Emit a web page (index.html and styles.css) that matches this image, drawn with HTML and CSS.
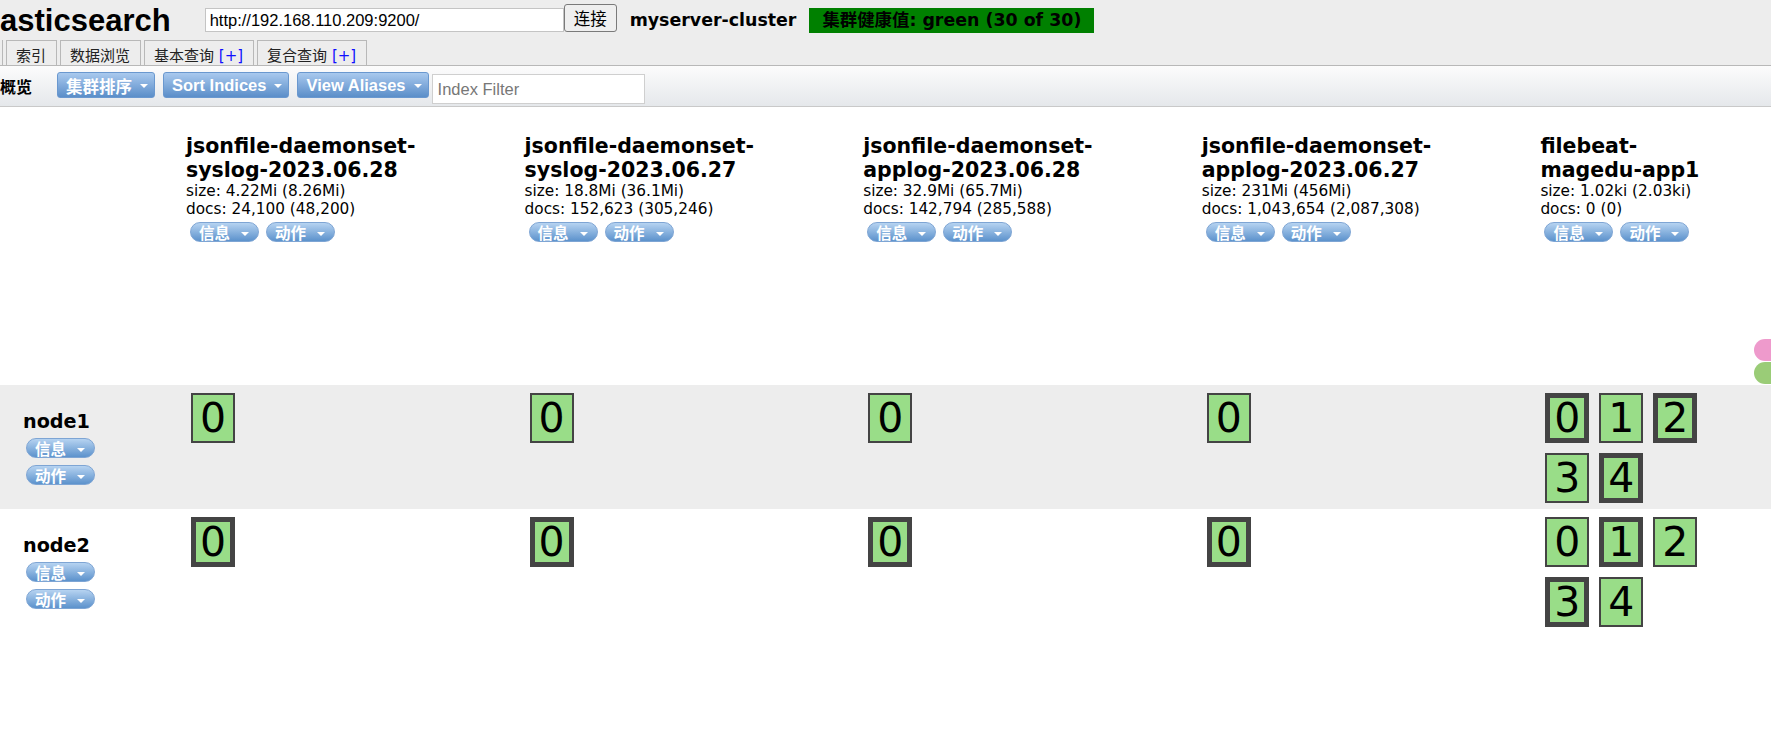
FILE: index.html
```html
<!DOCTYPE html>
<html lang="zh-CN">
<head>
  <meta charset="UTF-8" />
  <meta name="viewport" content="width=device-width, initial-scale=1.0"/>
  <title>elasticsearch-head</title>
  <link rel="stylesheet" href="styles.css">
</head>
<body>
  <div class="header">
    <div class="header-top">
      <h1 class="logo">asticsearch</h1>
      <input type="text" class="cluster-url" value="http://192.168.110.209:9200/">
      <button class="connect-btn">连接</button>
      <span class="cluster-name">myserver-cluster</span>
      <span class="cluster-health">集群健康值: green (30 of 30)</span>
    </div>
    <div class="tabs">
      <div class="tab tab-cut"></div>
      <div class="tab">索引</div>
      <div class="tab">数据浏览</div>
      <div class="tab">基本查询 <span class="tab-plus">[+]</span></div>
      <div class="tab">复合查询 <span class="tab-plus">[+]</span></div>
    </div>
  </div>

  <div class="toolbar">
    <h2>概览</h2>
    <button class="ui-btn">集群排序<span class="caret"></span></button>
    <button class="ui-btn">Sort Indices<span class="caret"></span></button>
    <button class="ui-btn">View Aliases<span class="caret"></span></button>
    <input type="text" class="index-filter" placeholder="Index Filter">
  </div>

  <div class="overview">
    <!-- index headers -->
    <div class="ov-row ov-head">
      <div class="node-cell"></div>
      <div class="index-cell">
        <h3>jsonfile-daemonset-syslog-2023.06.28</h3>
        <div class="index-info">size: 4.22Mi (8.26Mi)</div>
        <div class="index-info">docs: 24,100 (48,200)</div>
        <div class="pill-row">
          <span class="pill">信息<span class="caret"></span></span>
          <span class="pill">动作<span class="caret"></span></span>
        </div>
      </div>
      <div class="index-cell">
        <h3>jsonfile-daemonset-syslog-2023.06.27</h3>
        <div class="index-info">size: 18.8Mi (36.1Mi)</div>
        <div class="index-info">docs: 152,623 (305,246)</div>
        <div class="pill-row">
          <span class="pill">信息<span class="caret"></span></span>
          <span class="pill">动作<span class="caret"></span></span>
        </div>
      </div>
      <div class="index-cell">
        <h3>jsonfile-daemonset-applog-2023.06.28</h3>
        <div class="index-info">size: 32.9Mi (65.7Mi)</div>
        <div class="index-info">docs: 142,794 (285,588)</div>
        <div class="pill-row">
          <span class="pill">信息<span class="caret"></span></span>
          <span class="pill">动作<span class="caret"></span></span>
        </div>
      </div>
      <div class="index-cell">
        <h3>jsonfile-daemonset-applog-2023.06.27</h3>
        <div class="index-info">size: 231Mi (456Mi)</div>
        <div class="index-info">docs: 1,043,654 (2,087,308)</div>
        <div class="pill-row">
          <span class="pill">信息<span class="caret"></span></span>
          <span class="pill">动作<span class="caret"></span></span>
        </div>
      </div>
      <div class="index-cell last">
        <h3>filebeat-magedu-app1</h3>
        <div class="index-info">size: 1.02ki (2.03ki)</div>
        <div class="index-info">docs: 0 (0)</div>
        <div class="pill-row">
          <span class="pill">信息<span class="caret"></span></span>
          <span class="pill">动作<span class="caret"></span></span>
        </div>
      </div>
      <div class="alias-marks">
        <span class="alias alias-pink"></span>
        <span class="alias alias-green"></span>
      </div>
    </div>

    <!-- node1 -->
    <div class="ov-row node-row alt">
      <div class="node-cell">
        <div class="node-name">node1</div>
        <span class="pill">信息<span class="caret"></span></span>
        <span class="pill">动作<span class="caret"></span></span>
      </div>
      <div class="shards"><div class="shard">0</div></div>
      <div class="shards"><div class="shard">0</div></div>
      <div class="shards"><div class="shard">0</div></div>
      <div class="shards"><div class="shard">0</div></div>
      <div class="shards">
        <div class="shard primary">0</div>
        <div class="shard">1</div>
        <div class="shard primary">2</div>
        <div class="shard">3</div>
        <div class="shard primary">4</div>
      </div>
    </div>

    <!-- node2 -->
    <div class="ov-row node-row">
      <div class="node-cell">
        <div class="node-name">node2</div>
        <span class="pill">信息<span class="caret"></span></span>
        <span class="pill">动作<span class="caret"></span></span>
      </div>
      <div class="shards"><div class="shard primary">0</div></div>
      <div class="shards"><div class="shard primary">0</div></div>
      <div class="shards"><div class="shard primary">0</div></div>
      <div class="shards"><div class="shard primary">0</div></div>
      <div class="shards">
        <div class="shard">0</div>
        <div class="shard primary">1</div>
        <div class="shard">2</div>
        <div class="shard primary">3</div>
        <div class="shard">4</div>
      </div>
    </div>
  </div>
</body>
</html>
```

FILE: styles.css
```css
body {
  margin: 0;
  overflow: hidden;
  background: #fff;
  color: #000;
  font-family: "DejaVu Sans", "Noto Sans CJK SC", sans-serif;
}

/* ---- header ---- */
.header {
  background: #ededed;
  border-bottom: 1px solid #b8b8b8;
  height: 65px;
}

.header-top {
  display: flex;
  align-items: flex-start;
  height: 40px;
}

.logo {
  margin: 5px 0 0 0;
  font: bold 31px/31px "Liberation Sans", sans-serif;
}

.cluster-url {
  box-sizing: border-box;
  width: 359px;
  height: 24px;
  margin: 8px 0 0 34px;
  padding: 0 4px;
  border: 1px solid #c4c4c4;
  font: 16.5px "Liberation Sans", sans-serif;
  color: #000;
  outline: none;
}

.connect-btn {
  box-sizing: border-box;
  height: 28px;
  margin: 4px 0 0 0;
  padding: 0 9px;
  border: 1px solid #7a7a7a;
  border-radius: 3px;
  background: #efefef;
  font: 16.5px "Noto Sans CJK SC", sans-serif;
  color: #000;
}

.cluster-name {
  margin: 10px 0 0 13px;
  font-weight: bold;
  font-size: 17.4px;
  line-height: 20px;
}

.cluster-health {
  margin: 8px 0 0 13px;
  padding: 0 13px;
  height: 25px;
  line-height: 25px;
  background: #008000;
  font-weight: bold;
  font-size: 17.4px;
}

.tabs {
  display: flex;
  gap: 3px;
  height: 25px;
}

.tab {
  box-sizing: border-box;
  height: 25px;
  padding: 6px 10px 0 9px;
  border: 1px solid #b8b8b8;
  border-bottom: none;
  font-size: 15px;
  line-height: 18px;
  color: #222;
  white-space: nowrap;
}

.tab-cut {
  width: 3px;
  padding: 0;
  border-left: none;
  border-top: none;
}

.tab-plus {
  color: #1010ff;
}

/* ---- toolbar ---- */
.toolbar {
  display: flex;
  align-items: flex-start;
  height: 40px;
  border-bottom: 1px solid #c9c9c9;
  background: linear-gradient(#fcfcfc, #e5e8eb);
}

.toolbar h2 {
  margin: 7px 25px 0 0;
  font: bold 16px/26px "Noto Sans CJK SC", sans-serif;
}

.ui-btn {
  display: inline-flex;
  align-items: center;
  box-sizing: border-box;
  height: 26px;
  margin: 6px 8px 0 0;
  padding: 1px 6px 0 8px;
  border: 1px solid #6a98cf;
  border-radius: 3px;
  background: linear-gradient(#a9c9ee, #5b8ec9);
  color: #fff;
  font: bold 16.5px "Liberation Sans", "Noto Sans CJK SC", sans-serif;
  white-space: nowrap;
}

.caret {
  display: inline-block;
  width: 0;
  height: 0;
  margin-left: 8px;
  border-left: 4px solid transparent;
  border-right: 4px solid transparent;
  border-top: 4px solid #fff;
}

.index-filter {
  box-sizing: border-box;
  width: 213px;
  height: 30px;
  margin: 8px 0 0 -5px;
  padding: 0 5px;
  border: 1px solid #cfcfcf;
  font: 16.5px "Liberation Sans", sans-serif;
  outline: none;
}

.index-filter::placeholder {
  color: #777;
}

/* ---- cluster overview ---- */
.ov-row {
  display: grid;
  grid-template-columns: 186px repeat(4, 338.6px) 190px;
  position: relative;
}

.ov-head {
  height: 278px;
}

.index-cell {
  padding: 28px 38px 0 0;
}

.index-cell.last {
  padding-right: 0;
}

.index-cell h3 {
  margin: 0;
  font-size: 20.5px;
  line-height: 23.5px;
  font-weight: bold;
}

.index-info {
  font-size: 15.3px;
  line-height: 18.4px;
}

.pill-row {
  display: flex;
  gap: 7px;
  margin: 3px 0 0 4px;
}

.pill {
  display: inline-flex;
  align-items: flex-start;
  box-sizing: border-box;
  height: 20px;
  padding: 1px 9px 0 8px;
  border: 1px solid #7ea5d4;
  border-radius: 10px;
  background: linear-gradient(#b6d3f1, #5c92cc);
  color: #fff;
  font: bold 15.5px/17px "Noto Sans CJK SC", sans-serif;
  white-space: nowrap;
}

.pill .caret {
  margin: 8px 0 0 11px;
}

.alias-marks {
  position: absolute;
  right: 0;
  bottom: 1px;
  display: flex;
  flex-direction: column;
  gap: 1px;
}

.alias {
  width: 17px;
  height: 22px;
  border-radius: 11px 0 0 11px;
}

.alias-pink {
  background: #ee9acc;
}

.alias-green {
  background: #9acc77;
}

.node-row {
  padding: 3px 0 1px 0;
}

.node-row.alt {
  background: #ededed;
}

.node-cell {
  display: flex;
  flex-direction: column;
  justify-content: center;
  align-items: flex-start;
  padding-left: 23px;
}

.node-name {
  font-size: 19.2px;
  line-height: 22px;
  font-weight: bold;
  margin-bottom: 5px;
}

.node-cell .pill {
  margin-left: 3px;
}

.node-cell .pill + .pill {
  margin-top: 7px;
}

.shards {
  display: flex;
  flex-wrap: wrap;
  align-content: flex-start;
}

.shard {
  box-sizing: border-box;
  display: flex;
  align-items: center;
  justify-content: center;
  width: 44px;
  height: 50px;
  margin: 5px;
  border: 2px solid #444;
  background: #99dd88;
  font-size: 41px;
  line-height: 1;
}

.shard.primary {
  border-width: 5px;
}
```
